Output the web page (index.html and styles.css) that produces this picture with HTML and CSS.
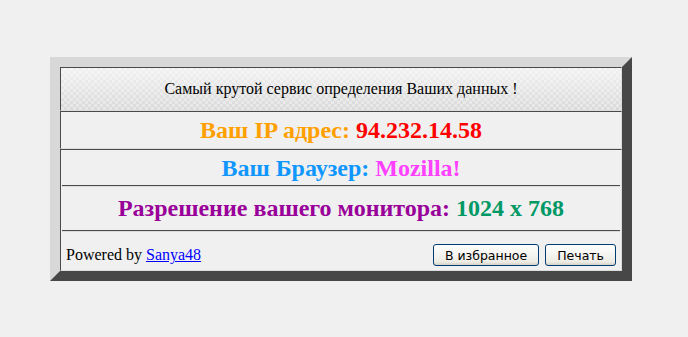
FILE: index.html
```html
<!DOCTYPE html>
<html lang="ru">
<head>
    <meta charset="UTF-8">
    <title>Ваши данные</title>
    <link rel="stylesheet" href="styles.css">
</head>
<body>
    <div class="frame">
        <div class="cell head">Самый крутой сервис определения Ваших данных !</div>
        <div class="cell line big">
            <span class="orange">Ваш IP адрес:</span>&nbsp;<span class="red">94.232.14.58</span>
        </div>
        <div class="cell stack">
            <div class="line big short">
                <span class="blue">Ваш Браузер:</span>&nbsp;<span class="pink">Mozilla!</span>
            </div>
            <hr>
            <div class="line big tall">
                <span class="purple">Разрешение вашего монитора:</span>&nbsp;<span class="green">1024 x 768</span>
            </div>
            <hr>
            <div class="footer">
                <span>Powered by <a href="#">Sanya48</a></span>
                <div class="buttons">
                    <button class="btn">В избранное</button>
                    <button class="btn">Печать</button>
                </div>
            </div>
        </div>
    </div>
</body>
</html>
```

FILE: styles.css
```css
body {
    margin: 0;
    background-color: #f0f0f0;
    font-family: "Liberation Serif", "DejaVu Serif", "Times New Roman", serif;
}
.frame {
    width: 562px;
    margin: 57px 0 0 50px;
    border: 10px solid;
    border-color: #d8d8d8 #474747 #474747 #d8d8d8;
    background-color: #f0f0f0;
}
.cell {
    border: 1px solid;
    border-color: #4a4a4a #dcdcdc #dcdcdc #4a4a4a;
}
.head {
    height: 42px;
    display: flex;
    align-items: center;
    justify-content: center;
    font-size: 16px;
    color: #000;
    background:
        repeating-conic-gradient(rgba(255, 255, 255, 0.35) 0 25%, transparent 0 50%) 0 0 / 6px 6px,
        linear-gradient(#f1f1f1, #d9d9d9);
}
.line {
    display: flex;
    align-items: center;
    justify-content: center;
    font-weight: bold;
    white-space: pre;
}
.cell.line {
    height: 36px;
}
.big {
    font-size: 24px;
}
.short {
    height: 34px;
}
.tall {
    height: 43px;
}
.stack {
    padding: 1px;
}
hr {
    margin: 0;
    height: 0;
    border: 0;
    border-top: 1px solid #4a4a4a;
    border-bottom: 1px solid #dcdcdc;
}
.orange { color: #ffa000; }
.red { color: #ff0000; }
.blue { color: #0f97ff; }
.pink { color: #ff40ff; }
.purple { color: #990099; }
.green { color: #009966; }
.footer {
    display: flex;
    align-items: center;
    justify-content: space-between;
    padding: 12px 4px 3px 4px;
    font-size: 16px;
}
.footer a {
    color: #0000ff;
}
.buttons {
    display: flex;
    gap: 6px;
}
.btn {
    height: 22px;
    padding: 0 11px;
    border: 1px solid #003c74;
    border-radius: 3px;
    background: linear-gradient(#ffffff, #ecebe4 85%, #d6d0c5);
    font-family: "DejaVu Sans", Tahoma, sans-serif;
    font-size: 12.5px;
    color: #000;
}
```
